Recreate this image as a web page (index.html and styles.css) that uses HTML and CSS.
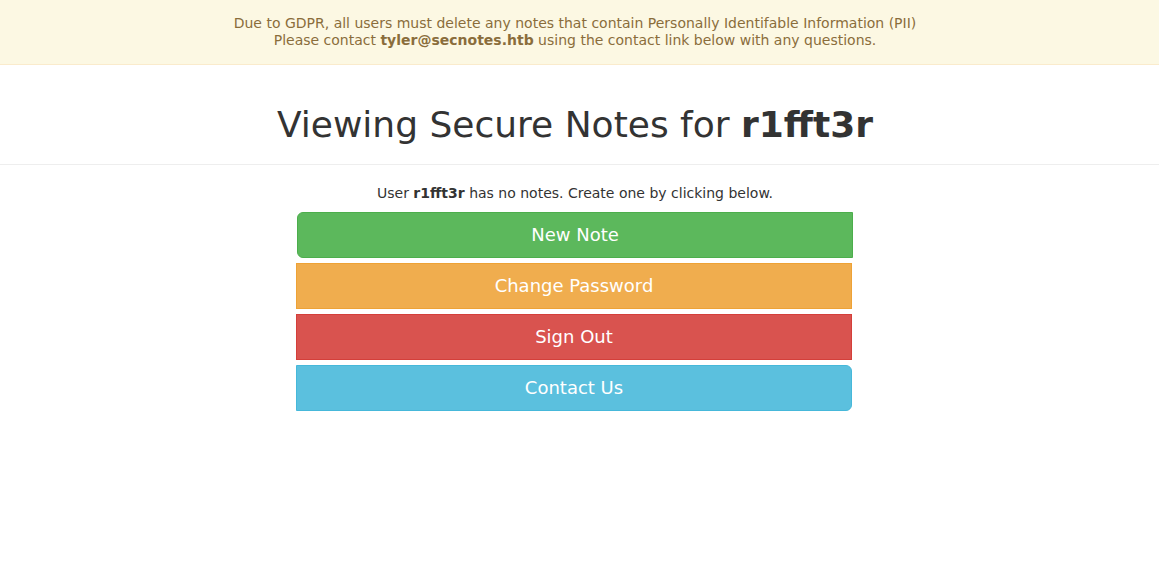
FILE: index.html
```html
<!DOCTYPE html>
<html>
<head>
<meta charset="utf-8">
<link rel="stylesheet" href="styles.css">
</head>
<body>
<div class="alert">
  <div class="inner">
    Due to GDPR, all users must delete any notes that contain Personally Identifable Information (PII)<br>
    Please contact <strong>tyler@secnotes.htb</strong> using the contact link below with any questions.
  </div>
</div>
<div class="page-header">
  <h1>Viewing Secure Notes for <strong>r1fft3r</strong></h1>
</div>
<div class="content">
  <p class="empty">User <strong>r1fft3r</strong> has no notes. Create one by clicking below.</p>
  <div class="btn-group">
    <a class="btn btn-success first">New Note</a>
    <a class="btn btn-warning mid">Change Password</a>
    <a class="btn btn-danger mid">Sign Out</a>
    <a class="btn btn-info last">Contact Us</a>
  </div>
</div>
</body>
</html>
```

FILE: styles.css
```css
html, body {
  margin: 0;
  padding: 0;
  background: #fff;
}
body {
  font-family: "DejaVu Sans", sans-serif;
  font-size: 14px;
  line-height: 20px;
  color: #333;
}
.alert {
  background: #fcf8e3;
  color: #8a6d3b;
  border-bottom: 1px solid #faebcc;
  padding: 15px 0 15px;
}
.alert .inner {
  text-align: center;
  line-height: 17px;
  padding-right: 9px;
}
.page-header {
  margin: 40px 0 18px;
  padding-bottom: 9px;
  border-bottom: 1px solid #eee;
  padding-right: 9px;
}
.page-header h1 {
  margin: 0 0 10px;
  font-size: 36px;
  font-weight: 500;
  line-height: 1.1;
  text-align: center;
  color: #333;
}
.page-header h1 strong {
  font-weight: bold;
}
.content {
  display: flex;
  flex-direction: column;
  align-items: center;
  padding-right: 9px;
}
.empty {
  margin: 0 0 9px;
  text-align: center;
}
.btn-group {
  width: 556px;
  display: flex;
  flex-direction: column;
  gap: 5px;
}
.btn {
  display: block;
  padding: 10px 16px;
  font-size: 18px;
  line-height: 24px;
  text-align: center;
  color: #fff;
  border: 1px solid transparent;
  border-radius: 0;
  margin-left: -1px;
  margin-right: 1px;
}
.btn.first {
  border-radius: 6px 0 0 6px;
  margin-left: 0;
  margin-right: 0;
}
.btn.last {
  border-radius: 0 6px 6px 0;
}
.btn-success { background: #5cb85c; border-color: #4cae4c; }
.btn-warning { background: #f0ad4e; border-color: #eea236; }
.btn-danger { background: #d9534f; border-color: #d43f3a; }
.btn-info { background: #5bc0de; border-color: #46b8da; }
```
